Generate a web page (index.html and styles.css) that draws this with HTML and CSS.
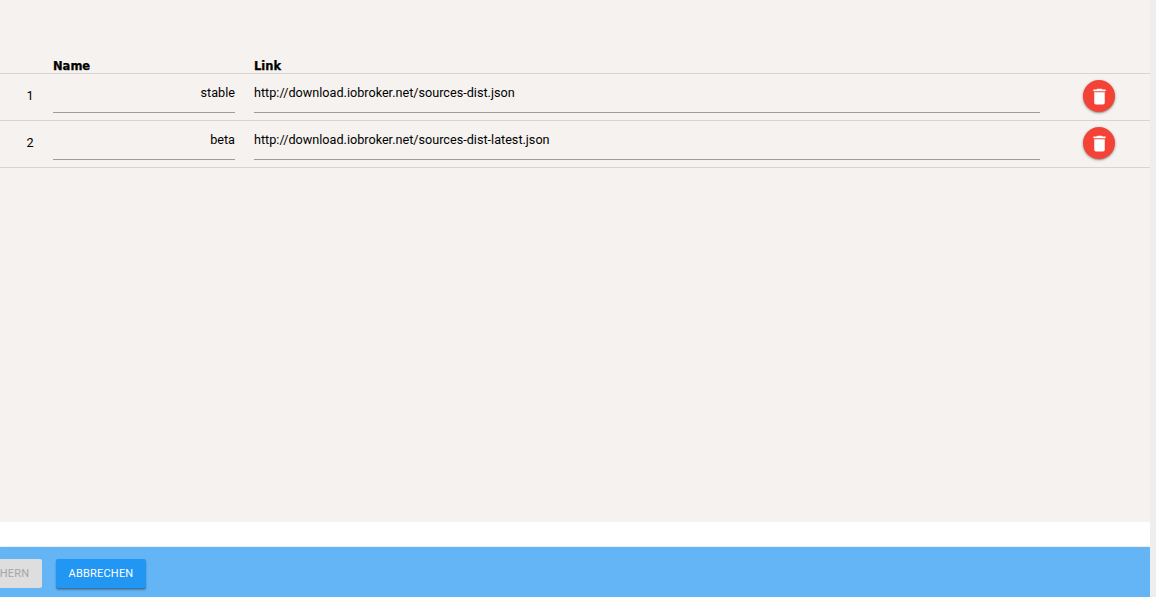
FILE: index.html
```html
<!DOCTYPE html>
<html lang="de">
<head>
<meta charset="utf-8">
<title>Quellen</title>
<link rel="stylesheet" href="styles.css">
</head>
<body>
<div class="app">
  <div class="content">
    <main class="panel">
      <div class="row head">
        <span class="num"></span>
        <span class="th">Name</span>
        <span class="th">Link</span>
      </div>
      <div class="row">
        <span class="num">1</span>
        <div class="field name">stable</div>
        <div class="field link">http://download.iobroker.net/sources-dist.json</div>
        <div class="action"><button class="del" aria-label="Löschen"><svg viewBox="0 0 24 24" class="ico"><path d="M6 19c0 1.1.9 2 2 2h8c1.1 0 2-.9 2-2V7H6v12zM19 4h-3.500l-1-1h-5l-1 1H5v2h14V4z"/></svg></button></div>
      </div>
      <div class="row">
        <span class="num">2</span>
        <div class="field name">beta</div>
        <div class="field link">http://download.iobroker.net/sources-dist-latest.json</div>
        <div class="action"><button class="del" aria-label="Löschen"><svg viewBox="0 0 24 24" class="ico"><path d="M6 19c0 1.1.9 2 2 2h8c1.1 0 2-.9 2-2V7H6v12zM19 4h-3.500l-1-1h-5l-1 1H5v2h14V4z"/></svg></button></div>
      </div>
    </main>
    <div class="strip"></div>
    <footer class="bar">
      <button class="btn save" disabled>SPEICHERN</button>
      <button class="btn cancel">ABBRECHEN</button>
    </footer>
  </div>
  <div class="scroll"></div>
</div>
</body>
</html>
```
FILE: styles.css
```css
* { box-sizing: border-box; }
html, body { margin: 0; height: 100%; overflow: hidden; }
body { font-family: Roboto, "Liberation Sans", sans-serif; font-size: 12.65px; color: #000; }
.app { display: flex; height: 597px; }
.content { width: 1150px; display: flex; flex-direction: column; overflow: hidden; }
.scroll { width: 6px; background: #eeeeee; }
.panel { height: 522px; background: #f5f2ef; padding-top: 52px; }
.strip { height: 25px; background: #fff; }
.bar { height: 50px; background: #64b5f6; display: flex; align-items: flex-start; padding-top: 12px; gap: 14px; box-shadow: 0 0 2px rgba(0,0,0,.2); }
.row { display: grid; grid-template-columns: 53px 182px 19px 786px 1fr; height: 47px; border-bottom: 1px solid #d8d4d1; }
.row > :nth-child(3) { grid-column: 4; }
.row.head { height: 22px; align-items: end; }
.th { font-family: "DejaVu Sans", sans-serif; font-weight: 700; font-size: 11.5px; line-height: 14px; color: #000; -webkit-text-stroke: .25px #000; }
.num { padding: 0 0 3px 7px; text-align: center; align-self: center; }
.field { height: 39px; border-bottom: 1px solid #9e9e9e; padding-top: 11px; line-height: 16px; }
.name { text-align: right; }
.action { display: flex; justify-content: flex-end; padding: 6px 35px 0 0; }
.del { width: 32px; height: 32px; border-radius: 50%; border: 0; padding: 0; background: #f44336; display: flex; align-items: center; justify-content: center; box-shadow: 0 1px 3px rgba(0,0,0,.35), 0 1px 1px rgba(0,0,0,.14); }
.ico { width: 21px; height: 21px; fill: #fff; }
.btn { height: 29px; border: 0; border-radius: 2px; font-family: Roboto, sans-serif; font-size: 11px; padding: 0; }
.save { width: 84px; margin-left: -42px; padding-right: 2px; background: #dedede; color: #a6a6a6; letter-spacing: .2px; }
.cancel { width: 90px; background: #2196f3; color: #fff; letter-spacing: .2px; box-shadow: 0 2px 2px rgba(0,0,0,.28), 0 1px 1px rgba(0,0,0,.14); }
```
